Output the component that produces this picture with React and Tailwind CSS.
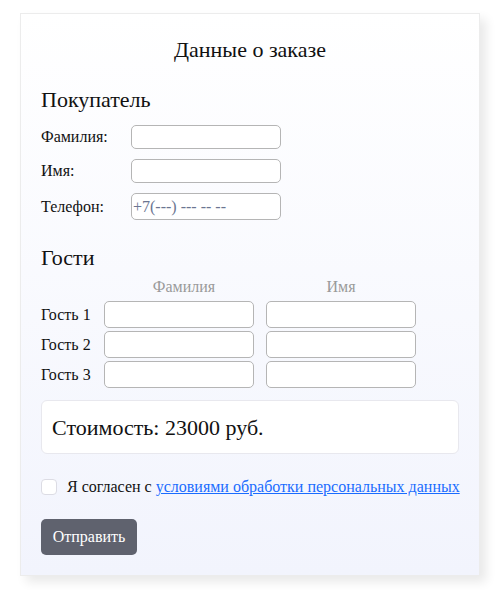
import React, { useState } from "react";

function Field({ label, placeholder, tall }) {
  return (
    <div className="flex items-center">
      <label className="w-[90px] text-[16px] leading-[18px]">{label}</label>
      <input
        type="text"
        placeholder={placeholder}
        className={`w-[150px] ${tall ? "h-[27px]" : "h-[24px]"} rounded-[5px] border border-[#b5b5b5] bg-white px-[1px] text-[16px] outline-none placeholder:text-[#6b7591]`}
      />
    </div>
  );
}

export default function App() {
  const [agree, setAgree] = useState(false);
  const guests = ["Гость 1", "Гость 2", "Гость 3"];

  return (
    <div className="min-h-[590px] bg-white pt-[13px] pl-[20px] font-['Liberation_Serif','Times_New_Roman',serif]">
      <div className="w-[460px] border border-[#ececec] bg-gradient-to-b from-white to-[#f2f4fd] px-[20px] pt-[23px] pb-[20px] text-[#111] shadow-[6px_6px_10px_rgba(0,0,0,0.09)]">
        <h1 className="text-center text-[22px] leading-[26px]">Данные о заказе</h1>

        <h2 className="mt-[24px] text-[22px] leading-[26px]">Покупатель</h2>
        <div className="mt-[12px] flex flex-col gap-[10px]">
          <Field label="Фамилия:" />
          <Field label="Имя:" />
          <Field label="Телефон:" placeholder="+7(---) --- -- --" tall />
        </div>

        <h2 className="mt-[25px] text-[22px] leading-[26px]">Гости</h2>
        <div className="mt-[7px] grid grid-cols-[51px_150px_150px] gap-x-[12px] gap-y-[3px]">
          <div />
          <div className="pl-[10px] text-center text-[16px] leading-[18px] text-[#9a9a9a]">Фамилия</div>
          <div className="text-center text-[16px] leading-[18px] text-[#9a9a9a]">Имя</div>
          {guests.map((g, i) => (
            <React.Fragment key={g}>
              <div className={`flex items-center whitespace-nowrap text-[16px] ${i === 0 ? "mt-[2px]" : ""}`}>{g}</div>
              <input className={`h-[27px] rounded-[5px] border border-[#b5b5b5] bg-white outline-none ${i === 0 ? "mt-[2px]" : ""}`} />
              <input className={`h-[27px] rounded-[5px] border border-[#b5b5b5] bg-white outline-none ${i === 0 ? "mt-[2px]" : ""}`} />
            </React.Fragment>
          ))}
        </div>

        <div className="mt-[12px] flex h-[54px] items-center rounded-[6px] border border-[#e8e8ee] bg-white px-[10px] text-[22px]">
          Стоимость: 23000 руб.
        </div>

        <label className="mt-[23px] flex h-[20px] items-center whitespace-nowrap text-[16px]">
          <input
            type="checkbox"
            checked={agree}
            onChange={(e) => setAgree(e.target.checked)}
            className="h-[16px] w-[16px] shrink-0 appearance-none rounded-[4px] border border-[#dcdce4] bg-white"
          />
          <span className="ml-[10px]">
            Я согласен с{" "}
            <a href="#" className="text-[#1a6cff] underline">
              условиями обработки персональных данных
            </a>
          </span>
        </label>

        <button className="mt-[22px] h-[36px] w-[96px] rounded-[5px] bg-[#5f626e] text-[16px] text-white">
          Отправить
        </button>
      </div>
    </div>
  );
}
